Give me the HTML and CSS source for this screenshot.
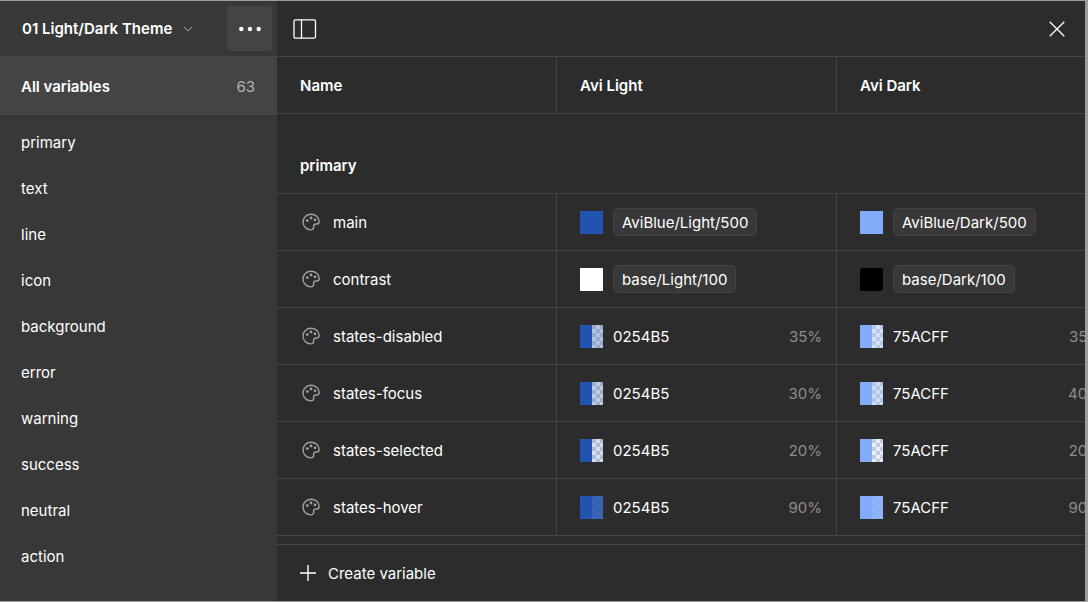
FILE: index.html
```html
<!DOCTYPE html>
<html lang="en">
<head>
    <meta charset="UTF-8">
    <meta name="viewport" content="width=device-width, initial-scale=1.0">
    <title>Variables</title>
    <link rel="stylesheet" href="styles.css">
</head>
<body>

    <svg class="sprite" width="0" height="0" aria-hidden="true">
        <symbol id="palette" viewBox="0 0 18 18">
            <path d="M9 1.2C4.6 1.2 1 4.6 1 9s3.4 7.9 7.9 7.9c1.9 0 2.700-.9 2.700-2.300v-1.400c0-1.500.9-2.200 2.300-2.200h1.100c1.300 0 2.200-.8 2.200-2.400C17.100 4.200 13.500 1.200 9 1.200z" fill="none" stroke="currentColor" stroke-width="1.400"/>
            <circle cx="5.300" cy="7.600" r="1.400" fill="currentColor"/>
            <circle cx="9" cy="5" r="1.400" fill="currentColor"/>
            <circle cx="13" cy="6.800" r="1.400" fill="currentColor"/>
        </symbol>
    </svg>

    <div class="window">
        <aside class="sidebar">
            <div class="sidebar-header">
                <button class="collection" type="button">
                    01 Light/Dark Theme
                    <svg width="10" height="6" viewBox="0 0 10 6" aria-hidden="true"><path d="M1 .8l4 4 4-4" fill="none" stroke="#8c8c8c" stroke-width="1.200"/></svg>
                </button>
                <button class="more" type="button" aria-label="More options">
                    <svg width="22" height="6" viewBox="0 0 22 6" fill="#fff" aria-hidden="true"><circle cx="2.300" cy="3" r="2.200"/><circle cx="11" cy="3" r="2.200"/><circle cx="19.700" cy="3" r="2.200"/></svg>
                </button>
            </div>
            <nav>
                <a class="all" href="#all">All variables <span class="count">63</span></a>
                <ul class="groups">
                    <li><a href="#primary">primary</a></li>
                    <li><a href="#text">text</a></li>
                    <li><a href="#line">line</a></li>
                    <li><a href="#icon">icon</a></li>
                    <li><a href="#background">background</a></li>
                    <li><a href="#error">error</a></li>
                    <li><a href="#warning">warning</a></li>
                    <li><a href="#success">success</a></li>
                    <li><a href="#neutral">neutral</a></li>
                    <li><a href="#action">action</a></li>
                </ul>
            </nav>
        </aside>

        <main class="main">
            <div class="toolbar">
                <button class="icon-btn" type="button" aria-label="Toggle sidebar">
                    <svg width="24" height="20" viewBox="0 0 24 20" fill="none" stroke="#fff" stroke-width="1.300" aria-hidden="true"><rect x="1" y=".8" width="21.500" height="18.400" rx="1.500"/><path d="M8.500 1v18"/></svg>
                </button>
                <button class="icon-btn" type="button" aria-label="Close">
                    <svg width="16" height="16" viewBox="0 0 16 16" stroke="#fff" stroke-width="1.300" aria-hidden="true"><path d="M.7.7l14.600 14.600M15.300.7L.7 15.300"/></svg>
                </button>
            </div>

            <div class="table-wrap">
                <table>
                    <thead>
                        <tr><th scope="col">Name</th><th scope="col">Avi Light</th><th scope="col">Avi Dark</th></tr>
                    </thead>
                    <tbody>
                        <tr class="group" id="primary"><th colspan="3" scope="rowgroup">primary</th></tr>
                        <tr>
                            <td><div class="cell name"><svg class="palette"><use href="#palette"/></svg>main</div></td>
                            <td><div class="cell"><span class="swatch light"></span><span class="alias">AviBlue/Light/500</span></div></td>
                            <td><div class="cell"><span class="swatch dark"></span><span class="alias">AviBlue/Dark/500</span></div></td>
                        </tr>
                        <tr>
                            <td><div class="cell name"><svg class="palette"><use href="#palette"/></svg>contrast</div></td>
                            <td><div class="cell"><span class="swatch white"></span><span class="alias">base/Light/100</span></div></td>
                            <td><div class="cell"><span class="swatch black"></span><span class="alias">base/Dark/100</span></div></td>
                        </tr>
                        <tr>
                            <td><div class="cell name"><svg class="palette"><use href="#palette"/></svg>states-disabled</div></td>
                            <td><div class="cell"><span class="swatch light" style="--alpha: .35"></span>0254B5<span class="percent">35%</span></div></td>
                            <td><div class="cell"><span class="swatch dark" style="--alpha: .35"></span>75ACFF<span class="percent">35%</span></div></td>
                        </tr>
                        <tr>
                            <td><div class="cell name"><svg class="palette"><use href="#palette"/></svg>states-focus</div></td>
                            <td><div class="cell"><span class="swatch light" style="--alpha: .3"></span>0254B5<span class="percent">30%</span></div></td>
                            <td><div class="cell"><span class="swatch dark" style="--alpha: .4"></span>75ACFF<span class="percent">40%</span></div></td>
                        </tr>
                        <tr>
                            <td><div class="cell name"><svg class="palette"><use href="#palette"/></svg>states-selected</div></td>
                            <td><div class="cell"><span class="swatch light" style="--alpha: .2"></span>0254B5<span class="percent">20%</span></div></td>
                            <td><div class="cell"><span class="swatch dark" style="--alpha: .2"></span>75ACFF<span class="percent">20%</span></div></td>
                        </tr>
                        <tr>
                            <td><div class="cell name"><svg class="palette"><use href="#palette"/></svg>states-hover</div></td>
                            <td><div class="cell"><span class="swatch light" style="--alpha: .9"></span>0254B5<span class="percent">90%</span></div></td>
                            <td><div class="cell"><span class="swatch dark" style="--alpha: .9"></span>75ACFF<span class="percent">90%</span></div></td>
                        </tr>
                    </tbody>
                </table>
            </div>

            <div class="footer">
                <button class="create" type="button">
                    <svg width="16" height="16" viewBox="0 0 16 16" stroke="#fff" stroke-width="1.400" aria-hidden="true"><path d="M8 0v16M0 8h16"/></svg>
                    Create variable
                </button>
            </div>
        </main>
    </div>

</body>
</html>
```

FILE: styles.css
```css
* {
    box-sizing: border-box;
}
body {
    margin: 0;
    background: #a6a6a6;
    color: #fff;
    font: 15px/25px Inter, "Liberation Sans", sans-serif;
}
button {
    padding: 0;
    border: 0;
    background: none;
    color: inherit;
    font: inherit;
    cursor: pointer;
}
a {
    color: inherit;
    text-decoration: none;
}
svg {
    display: block;
    flex: none;
}
.sprite {
    position: absolute;
}
.window {
    display: flex;
    min-height: 100vh;
    border: solid #9c9c9c;
    border-width: 1px 3px 1px 0;
    background: #2c2c2c;
    overflow: hidden;
}

/* sidebar */
.sidebar {
    flex: none;
    width: 277px;
    background: #383838;
}
.sidebar-header {
    display: flex;
    align-items: center;
    justify-content: space-between;
    height: 56px;
    padding: 0 5px 0 22px;
    border-bottom: 1px solid #444;
}
.collection {
    display: flex;
    align-items: center;
    gap: 11px;
    font-weight: 600;
}
.more {
    display: flex;
    align-items: center;
    justify-content: center;
    width: 45px;
    height: 45px;
    border-radius: 4px;
    background: #444;
}
.all {
    display: flex;
    align-items: center;
    justify-content: space-between;
    height: 58px;
    padding: 0 22px 0 21px;
    background: #444;
    font-weight: 600;
}
.count {
    color: #b3b3b3;
    font-weight: 400;
}
.groups {
    margin: 0;
    padding: 4px 0;
    list-style: none;
}
.groups a {
    display: block;
    padding: 11px 21px 10px;
}

/* variables table */
.main {
    display: flex;
    flex: 1;
    flex-direction: column;
    min-width: 0;
}
.toolbar {
    display: flex;
    align-items: center;
    justify-content: space-between;
    height: 56px;
    padding: 0 20px 0 16px;
    border-bottom: 1px solid #444;
}
.table-wrap {
    flex: 1;
    overflow: hidden;
}
table {
    width: 840px;
    border-spacing: 0;
    table-layout: fixed;
}
th, td {
    height: 57px;
    padding: 0 14px 0 23px;
    border-right: 1px solid #444;
    border-bottom: 1px solid #444;
    text-align: left;
}
th {
    font-weight: 600;
}
.group th {
    height: 80px;
    padding-top: 23px;
    border-right: 0;
}
.cell {
    display: flex;
    align-items: center;
    gap: 10px;
}
.name {
    gap: 13px;
    padding-left: 2px;
}
.palette {
    width: 18px;
    height: 18px;
    color: #a0a0a0;
}
.swatch {
    display: flex;
    width: 23px;
    height: 23px;
    border-radius: 1px;
    background: repeating-conic-gradient(#d4d4d4 0 25%, #fff 0 50%) 0 0 / 8px 8px;
    overflow: hidden;
}
.swatch::before, .swatch::after {
    content: "";
    flex: 1;
    background: var(--color);
}
.swatch::after {
    opacity: var(--alpha, 1);
}
.light {
    --color: #2353b0;
}
.dark {
    --color: #82acfa;
}
.white {
    --color: #fff;
}
.black {
    --color: #000;
}
.alias {
    padding: 1px 8px 0;
    border: 1px solid #444;
    border-radius: 5px;
    background: #383838;
}
.percent {
    margin-left: auto;
    color: #8c8c8c;
}
.footer {
    display: flex;
    align-items: center;
    height: 57px;
    padding: 0 23px;
    border-top: 1px solid #444;
}
.create {
    display: flex;
    align-items: center;
    gap: 12px;
}
```
